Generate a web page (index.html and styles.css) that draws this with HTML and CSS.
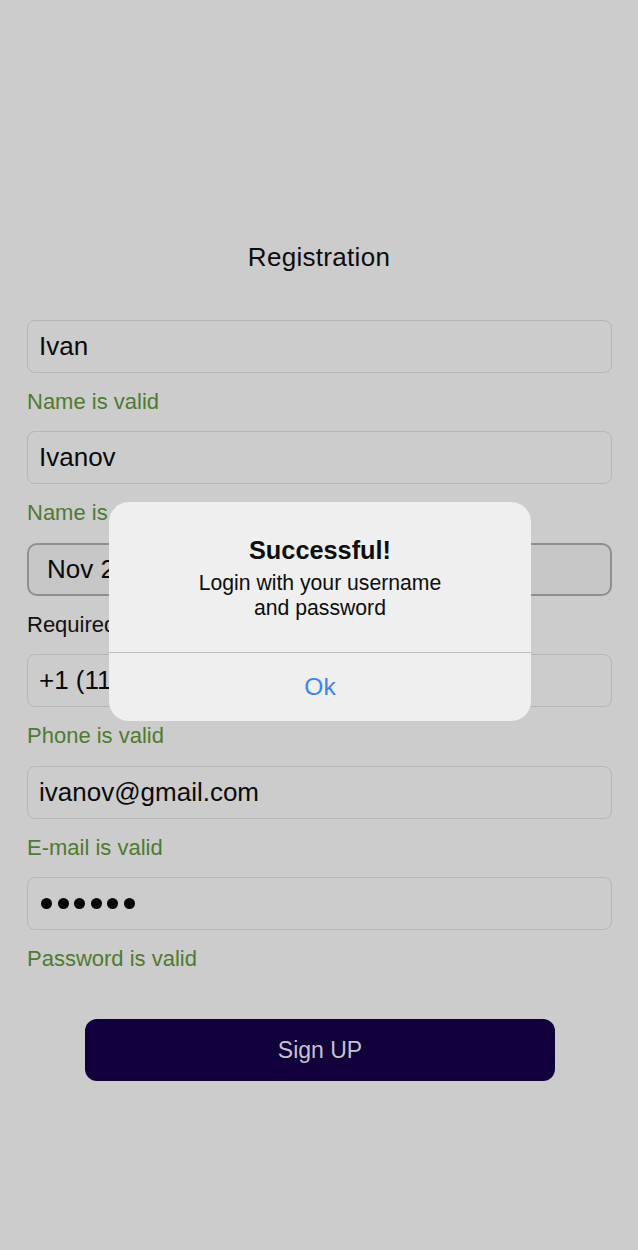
FILE: index.html
```html
<!DOCTYPE html>
<html>
<head>
<meta charset="utf-8">
<link rel="stylesheet" href="styles.css">
</head>
<body>
<div class="screen">
  <h1 class="title">Registration</h1>
  <form class="form">
    <div class="field"><div class="input">Ivan</div><div class="hint valid">Name is valid</div></div>
    <div class="field"><div class="input">Ivanov</div><div class="hint valid">Name is valid</div></div>
    <div class="field"><div class="input date"><span class="date-value">Nov 20, 1995</span></div><div class="hint">Required</div></div>
    <div class="field"><div class="input">+1 (111) 111-1111</div><div class="hint valid">Phone is valid</div></div>
    <div class="field"><div class="input">ivanov@gmail.com</div><div class="hint valid">E-mail is valid</div></div>
    <div class="field"><div class="input password" aria-label="password"><span class="dot"></span><span class="dot"></span><span class="dot"></span><span class="dot"></span><span class="dot"></span><span class="dot"></span></div><div class="hint valid">Password is valid</div></div>
    <div class="actions"><button type="button" class="signup">Sign UP</button></div>
  </form>
  <div class="alert">
    <div class="alert-body">
      <div class="alert-title">Successful!</div>
      <div class="alert-msg">Login with your username<br>and password</div>
    </div>
    <div class="alert-btn">Ok</div>
  </div>
</div>
</body>
</html>
```
FILE: styles.css
```css
html, body {
  margin: 0;
  padding: 0;
  background: #cccccc;
}
body {
  font-family: "Liberation Sans", Arial, sans-serif;
  color: #0d0d0d;
}
.screen {
  position: relative;
  width: 638px;
  height: 1250px;
  padding-top: 241px;
  box-sizing: border-box;
}
.title {
  margin: 0 0 47px;
  font-size: 26px;
  font-weight: normal;
  line-height: 32px;
  text-align: center;
  letter-spacing: 0.3px;
}
.form {
  display: flex;
  flex-direction: column;
  padding: 0 26px 0 27px;
}
.field {
  display: flex;
  flex-direction: column;
}
.input {
  height: 53px;
  box-sizing: border-box;
  border: 1px solid #b6b6b6;
  border-radius: 8px;
  padding: 0 11px;
  display: flex;
  align-items: center;
  font-size: 26px;
  color: #0a0a0a;
}
.input.date {
  border: 2px solid #8f8f8f;
  border-radius: 10px;
  background: #c7c7c7;
  padding-left: 18px;
}
.input.password {
  gap: 5.5px;
  padding-left: 13px;
}
.dot {
  width: 11px;
  height: 11px;
  border-radius: 50%;
  background: #050505;
}
.hint {
  margin: 16px 0 16.4px;
  line-height: 26px;
  font-size: 22px;
  color: #111;
}
.hint.valid {
  color: #4f7a31;
}
.actions {
  display: flex;
  justify-content: center;
  padding-top: 31px;
}
.signup {
  width: 470px;
  height: 62px;
  border: none;
  border-radius: 12px;
  background: #11003b;
  color: #c4c4ca;
  font-family: "Liberation Sans", Arial, sans-serif;
  font-size: 23px;
  margin-left: 1px;
}
.alert {
  position: absolute;
  left: 109px;
  top: 502px;
  width: 422px;
  background: #efefef;
  border-radius: 20px;
  overflow: hidden;
}
.alert-body {
  padding: 33px 20px 32px;
  text-align: center;
  border-bottom: 1px solid #bdbdbd;
}
.alert-title {
  font-size: 25.3px;
  font-weight: bold;
  line-height: 30px;
  margin-bottom: 5px;
}
.alert-msg {
  font-size: 21.2px;
  line-height: 25px;
}
.alert-btn {
  height: 68px;
  display: flex;
  align-items: center;
  justify-content: center;
  color: #3b84f5;
  font-size: 24.5px;
}
```
